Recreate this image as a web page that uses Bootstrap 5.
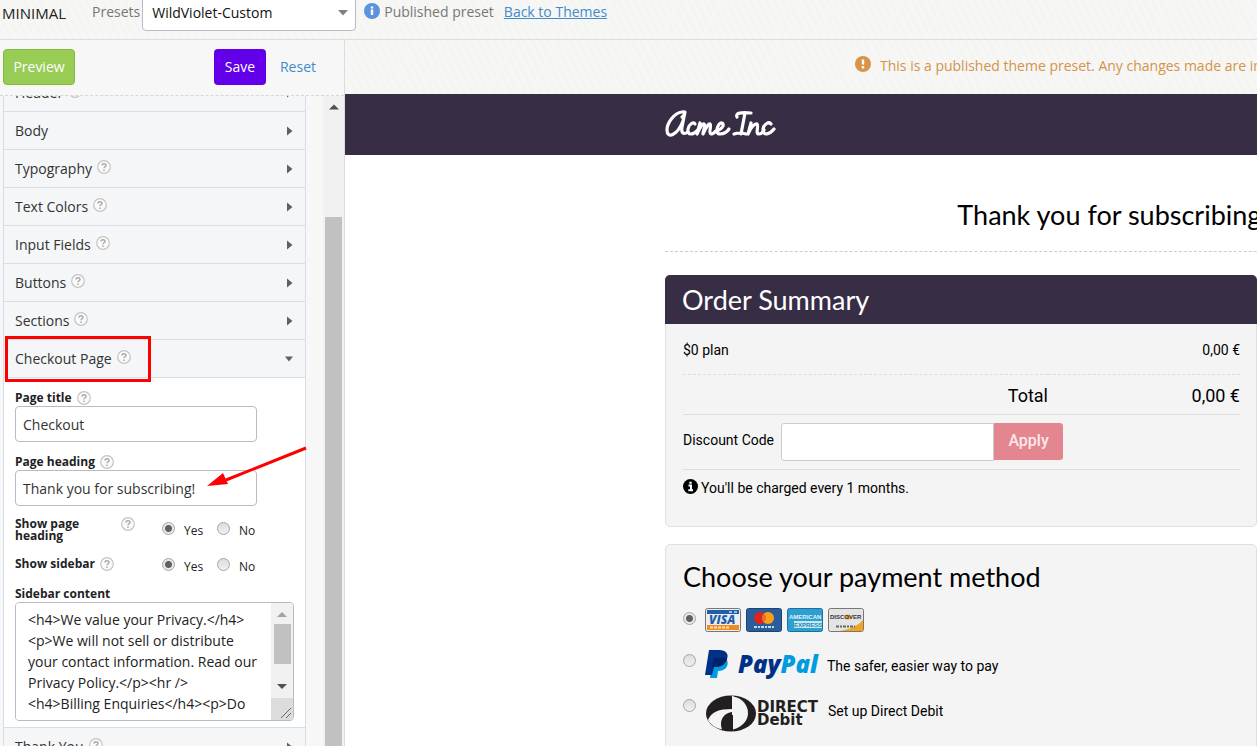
<!DOCTYPE html>
<html lang="en">
<head>
<meta charset="utf-8">
<meta name="viewport" content="width=device-width, initial-scale=1">
<title>Theme editor - Minimal</title>
<link href="https://cdn.jsdelivr.net/npm/bootstrap@5.3.0/dist/css/bootstrap.min.css" rel="stylesheet">
<style>
  body { font: 14px/20px "Open Sans", sans-serif; color: #222; background: #fff; }
  a { color: #428bca; }
  .paper { background: repeating-linear-gradient(65deg, #f6f6f4 0 3px, #f4f4f2 3px 5px, #f7f7f5 5px 7px); }

  /* top bar */
  .topbar { height: 40px; border-bottom: 1px solid #dcdcda; color: #777; padding-left: 2px; }
  .theme-name { color: #222; font-size: 15px; width: 90px; padding-top: 3px; }
  .preset-select { width: 214px; height: 40px; margin: -9px 8px 0 2px; padding: 4px 9px 0; font: 14px/20px "Open Sans", sans-serif; color: #111;
    border: 1px solid #bbb9c8; border-radius: 4px; background: #fff url("data:image/svg+xml,%3Csvg xmlns='http://www.w3.org/2000/svg' viewBox='0 0 10 6'%3E%3Cpath d='M0 0h10L5 5.500z' fill='%23808080'/%3E%3C/svg%3E") no-repeat right 7px top 18px / 10px 6px; }
  .status { gap: 4px; margin-right: 10px; }
  .tb-item { padding-top: 2px; }

  /* sidebar */
  .sidebar { width: 345px; background: #f7f7f7; border-right: 1px solid #dcdcdc; }
  .toolbar { height: 56px; padding: 9px 28px 0 3px; border-bottom: 1px dashed #d6d6d6; }
  .tool-btn { font: 14px/20px "Open Sans", sans-serif; height: 36px; padding: 0; border-radius: 4px; color: #fff; }
  .btn-preview { background: #9c5; border: 1px solid #82ba3c; width: 72px; }
  .btn-save { background: #6200ea; width: 52px; margin-right: 14px; border: 0; }
  .panel { width: 303px; margin: -22px 0 0 3px; border: 1px solid #d6dee9; border-width: 0 1px; background: #f4f6f8; }
  .panel-row { height: 38px; padding: 0 12px 0 11px; border: 0; border-bottom: 1px solid #d6dee9; background: #f4f6f8; font: 14px/20px "Open Sans", sans-serif; color: #333; }
  .help { width: 14px; height: 14px; flex: none; margin: -4px 0 0 5px; }
  .lbl .help { margin-top: -1px; }
  .marked { outline: 3px solid #f00; outline-offset: -1px; margin-left: -8px; padding: 11px 18px 11px 8px; }
  .form-area { background: #fff; padding: 13px 11px 6px; border-bottom: 1px solid #d6dee9; }
  .lbl { font-size: 12px; line-height: 14px; font-weight: 700; color: #222; margin-bottom: 1px; }
  .lbl-next { padding-top: 13px; }
  .lbl-side { padding-top: 11px; }
  .field { width: 242px; height: 36px; border: 1px solid #bbb9c8; border-radius: 4px; padding: 0 7px; color: #333; background: #fff; }
  .lbl-col { width: 120px; line-height: 12px; margin: 0; }
  .choices { margin-left: 27px; }
  .choice { width: 55px; font-size: 12px; line-height: 18px; gap: 9px; }
  .radio-grey { appearance: none; width: 13px; height: 13px; margin: 0; flex: none; border: 1px solid #a5a5a5; border-radius: 50%; background: linear-gradient(#ddd, #f0f0f0); }
  .radio-grey:checked { background: radial-gradient(circle, #606060 0 3px, #e9e9e9 4px); }
  .code-box { width: 279px; height: 119px; border: 1px solid #bbb9c8; border-radius: 4px; overflow: hidden; }
  .code-text { border: 0; resize: none; overflow: hidden; padding: 6px 0 0 12px; line-height: 21px; color: #222; background: #fff; min-width: 0; white-space: pre; }
  .code-scroll { width: 22px; background: #f1f1f1; }
  .code-thumb { width: 17px; height: 40px; background: #c1c1c1; }
  .grip { width: 22px; height: 22px; background: #dcdcdc; }
  .scroll-rail { width: 21px; background: #f1f1f1; padding: 8px 2px 0; }
  .rail-thumb { width: 17px; background: #c1c1c1; margin-top: 107px; }
  .arrow-layer { position: absolute; right: -14px; top: -25px; width: 102px; height: 44px; pointer-events: none; }

  /* themed page; it is wider than the pane that shows it */
  .notice { height: 54px; color: #d4934a; padding: 16px 0 0 510px; gap: 9px; }
  .page-view { font: 14px/20px Roboto, sans-serif; color: #000; background: #fff; }
  .brand-bar { height: 61px; background: #372d45; padding: 10px 0 0 320px; }
  .stage { width: 896px; margin-left: 320px; }
  .page-heading { font: 27px/32px Lato, sans-serif; margin: 0; padding: 44px 0 20px; border-bottom: 1px dashed #ccc; }
  .box { width: 592px; border: 1px solid #e0e0e0; border-radius: 5px; background: #f4f4f4; margin-bottom: 17px; }
  .box-first { margin-top: 23px; }
  .box-head { background: #372d45; height: 49px; padding: 9px 17px; border-radius: 5px 5px 0 0; margin: -1px -1px 0; }
  .box-title { font: 27px/32px Lato, sans-serif; margin: 0; }
  .box-body { padding: 0 16px 0 17px; }
  .row-plan td { height: 50px; border-bottom: 1px dashed #ddd; padding: 2px 0 0; }
  .row-total > * { height: 40px; border-bottom: 1px solid #ddd; font-size: 18px; font-weight: 400; padding: 4px 0 0; }
  .amount { width: 192px; }
  .discount { height: 55px; padding-top: 8px; border-bottom: 1px solid #ddd; gap: 7px; }
  .discount-label { padding-top: 7px; }
  .code-field { width: 213px; height: 38px; border: 1px solid #ccc; border-radius: 3px 0 0 3px; background: #fff; }
  .btn-apply { width: 69px; height: 37px; border: 0; background: #e4868f; color: #fbe9eb; font: 500 16px/20px Roboto, sans-serif; border-radius: 0 3px 3px 0; }
  .charge { height: 56px; padding-top: 8px; gap: 3px; }
  .charge-icon { margin-top: 1px; }
  .pay-title { padding-top: 16px; }
  .pay-row { gap: 9px; padding-top: 18px; }
  .pay-row .radio-grey { margin-top: 4px; }
  .cards-row { padding-top: 15px; }
  .debit-row { padding-top: 14px; }
  .pay-cards { gap: 5px; }
  .pay-text { padding: 6px 0 0; margin-left: -2px; }
  .pay-box { padding-bottom: 40px; }
</style>
</head>
<body class="vh-100 overflow-hidden d-flex flex-column">

<svg class="d-none">
  <symbol id="help" viewBox="0 0 14 14"><circle cx="7" cy="7" r="6.300" fill="#fafafa" stroke="#c4c4c4" stroke-width="1.200"/><path d="M5 5.500C5 3.200 9 3.200 9 5.400C9 6.800 7 6.700 7 8.300M7 9.500V10.900" fill="none" stroke="#aaa" stroke-width="1.500"/></symbol>
  <symbol id="right" viewBox="0 0 6 10"><path d="M0 0.500L5.500 5L0 9.500z" fill="#606060"/></symbol>
</svg>

<header class="topbar paper d-flex flex-shrink-0 text-nowrap">
  <div class="theme-name">MINIMAL</div>
  <label class="tb-item" for="preset">Presets</label>
  <select class="preset-select form-select" id="preset"><option>WildViolet-Custom</option></select>
  <span class="status tb-item d-flex"><svg width="16" height="18" viewBox="0 -1 16 18"><circle cx="8" cy="8" r="8" fill="#5b93dc"/><path d="M8 6.500V12M8 3.500V5.500" stroke="#fff" stroke-width="2.400"/></svg>Published preset</span>
  <a class="tb-item" href="#">Back to Themes</a>
</header>

<div class="d-flex flex-grow-1 overflow-hidden">
  <aside class="sidebar d-flex flex-column flex-shrink-0">
    <div class="toolbar d-flex align-items-start flex-shrink-0">
      <button class="tool-btn btn-preview">Preview</button>
      <button class="tool-btn btn-save ms-auto">Save</button>
      <a class="text-decoration-none pt-2" href="#">Reset</a>
    </div>
    <div class="d-flex flex-grow-1 overflow-hidden">
      <div class="panel flex-shrink-0">
        <button class="panel-row w-100 d-flex align-items-center">Header<svg class="help"><use href="#help"/></svg><svg class="ms-auto" width="6" height="10"><use href="#right"/></svg></button>
        <button class="panel-row w-100 d-flex align-items-center">Body<svg class="ms-auto" width="6" height="10"><use href="#right"/></svg></button>
        <button class="panel-row w-100 d-flex align-items-center">Typography<svg class="help"><use href="#help"/></svg><svg class="ms-auto" width="6" height="10"><use href="#right"/></svg></button>
        <button class="panel-row w-100 d-flex align-items-center">Text Colors<svg class="help"><use href="#help"/></svg><svg class="ms-auto" width="6" height="10"><use href="#right"/></svg></button>
        <button class="panel-row w-100 d-flex align-items-center">Input Fields<svg class="help"><use href="#help"/></svg><svg class="ms-auto" width="6" height="10"><use href="#right"/></svg></button>
        <button class="panel-row w-100 d-flex align-items-center">Buttons<svg class="help"><use href="#help"/></svg><svg class="ms-auto" width="6" height="10"><use href="#right"/></svg></button>
        <button class="panel-row w-100 d-flex align-items-center">Sections<svg class="help"><use href="#help"/></svg><svg class="ms-auto" width="6" height="10"><use href="#right"/></svg></button>
        <button class="panel-row w-100 d-flex align-items-center"><span class="marked d-flex align-items-center">Checkout Page<svg class="help"><use href="#help"/></svg></span><svg class="ms-auto" width="8" height="6" viewBox="0 0 10 6" preserveAspectRatio="none"><path d="M0 0.500H10L5 5.500z" fill="#606060"/></svg></button>

        <div class="form-area">
          <label class="lbl d-flex align-items-center" for="ptitle">Page title<svg class="help"><use href="#help"/></svg></label>
          <input class="field d-block" id="ptitle" value="Checkout">
          <label class="lbl lbl-next d-flex align-items-center" for="phead">Page heading<svg class="help"><use href="#help"/></svg></label>
          <div class="position-relative">
            <input class="field d-block" id="phead" value="Thank you for subscribing!">
            <svg class="arrow-layer" viewBox="0 0 102 44"><path d="M100 3L20 35" stroke="#f00" stroke-width="3"/><path d="M1 41L17 28L22 39z" fill="#f00"/></svg>
          </div>
          <div class="d-flex pt-2 pb-3">
            <div class="lbl lbl-col d-flex justify-content-between pt-1"><span>Show page<br>heading</span><svg class="help"><use href="#help"/></svg></div>
            <div class="choices d-flex pt-2">
              <label class="choice d-flex"><input class="radio-grey" type="radio" name="sh" checked>Yes</label>
              <label class="choice d-flex"><input class="radio-grey" type="radio" name="sh">No</label>
            </div>
          </div>
          <div class="d-flex">
            <div class="lbl lbl-col d-flex">Show sidebar<svg class="help"><use href="#help"/></svg></div>
            <div class="choices d-flex">
              <label class="choice d-flex"><input class="radio-grey" type="radio" name="ss" checked>Yes</label>
              <label class="choice d-flex"><input class="radio-grey" type="radio" name="ss">No</label>
            </div>
          </div>
          <label class="lbl lbl-side d-block" for="side">Sidebar content</label>
          <div class="code-box d-flex">
            <textarea class="code-text flex-grow-1" id="side">&lt;h4&gt;We value your Privacy.&lt;/h4&gt;
&lt;p&gt;We will not sell or distribute
your contact information. Read our
Privacy Policy.&lt;/p&gt;&lt;hr /&gt;
&lt;h4&gt;Billing Enquiries&lt;/h4&gt;&lt;p&gt;Do</textarea>
            <div class="code-scroll d-flex flex-column align-items-center">
              <svg width="10" height="21" viewBox="0 0 10 21"><path d="M0 14L5 9L10 14z" fill="#a3a3a3"/></svg>
              <div class="code-thumb"></div>
              <svg class="mt-auto" width="10" height="22" viewBox="0 0 10 22"><path d="M0 8H10L5 13z" fill="#505050"/></svg>
              <div class="grip"><svg class="d-block" width="22" height="22"><path d="M10 20L20 10M15 20L20 15" stroke="#666"/></svg></div>
            </div>
          </div>
        </div>
        <button class="panel-row w-100 d-flex align-items-center">Thank You<svg class="help"><use href="#help"/></svg><svg class="ms-auto" width="6" height="10"><use href="#right"/></svg></button>
      </div>
      <div class="scroll-rail ms-auto d-flex flex-column align-items-center">
        <svg class="flex-shrink-0" width="10" height="6"><path d="M0 5.500L5 0.500L10 5.500z" fill="#505050"/></svg>
        <div class="rail-thumb flex-grow-1"></div>
      </div>
    </div>
  </aside>

  <main class="flex-grow-1 overflow-hidden">
    <div class="notice paper d-flex text-nowrap overflow-hidden"><svg class="flex-shrink-0" width="16" height="16"><circle cx="8" cy="8" r="8" fill="#d8954a"/><path d="M8 3.500V8.500M8 10V12.400" stroke="#fff" stroke-width="2.400"/></svg><span>This is a published theme preset. Any changes made are immediately</span></div>
    <div class="page-view">
      <div class="brand-bar">
        <svg class="d-block" width="112" height="36" viewBox="0 0 112 36" role="img" aria-label="Acme Inc" fill="none" stroke="#fff" stroke-width="3.200" stroke-linecap="round" stroke-linejoin="round">
          <path d="M17 13C21 10 20 7 17 8C9 9 2 19 2 26C2 35 12 32 18 17L20 8L17 23C16 29 18 31 23 28"/>
          <path d="M30 20C29 17 24 20 23 25C22 32 28 31 33 26"/>
          <path d="M35 19L32 30C35 23 38 19 39 20C41 21 38 27 38 30C41 23 44 19 45 20C47 21 43 29 46 30C48 30 50 28 51 27"/>
          <path d="M51 27C57 26 60 20 57 19C53 18 49 30 55 30C59 30 62 28 64 25"/>
          <path d="M72 13C70 9 76 8 86 9M80 9L76 30M69 30Q75 28 81 30"/>
          <path d="M86 19L83 30C86 23 90 19 92 20C94 22 90 30 94 30C96 30 98 28 99 26"/>
          <path d="M106 20C104 17 99 20 98 25C98 33 105 30 109 25"/>
        </svg>
      </div>
      <div class="stage">
        <h1 class="page-heading text-center">Thank you for subscribing!</h1>

        <section class="box box-first">
          <div class="box-head"><h2 class="box-title text-white">Order Summary</h2></div>
          <div class="box-body">
            <table class="w-100">
              <tr class="row-plan"><td>$0 plan</td><td class="amount text-end">0,00 €</td></tr>
              <tr class="row-total"><th class="text-end" scope="row">Total</th><td class="text-end">0,00 €</td></tr>
            </table>
            <div class="discount d-flex">
              <label class="discount-label" for="code">Discount Code</label>
              <div class="d-flex">
                <input class="code-field" id="code">
                <button class="btn-apply">Apply</button>
              </div>
            </div>
            <div class="charge d-flex"><svg class="charge-icon" width="15" height="15" viewBox="0 0 15 15"><circle cx="7.500" cy="7.500" r="7.500"/><path d="M5.500 6.500H8V11M5.300 11.200H10M6.300 3.800H8.700" fill="none" stroke="#fff" stroke-width="2"/></svg>You'll be charged every 1 months.</div>
          </div>
        </section>

        <section class="box">
          <div class="box-body pay-box">
            <h2 class="box-title pay-title">Choose your payment method</h2>
            <label class="pay-row cards-row d-flex">
              <input class="radio-grey" type="radio" name="pay" checked>
              <span class="pay-cards d-flex">
                <svg width="36" height="24" viewBox="0 0 36 24"><rect x=".5" y=".5" width="35" height="23" rx="2" fill="#eee" stroke="#777"/><path d="M2 2H34V6H2z" fill="#1d5fae"/><path d="M2 17H34V22H2z" fill="#f08c1c"/><path d="M24 4H27M29 4H32" stroke="#cde" stroke-width="1.500"/><path d="M5 19.500H25" stroke="#fde0b8" stroke-width="2" stroke-dasharray="3 1"/><text x="4" y="16" font-family="Open Sans, sans-serif" font-size="12" font-weight="800" font-style="italic" fill="#1d5fae">VISA</text></svg>
                <svg width="36" height="24" viewBox="0 0 36 24"><rect x=".5" y=".5" width="35" height="23" rx="2" fill="#2a5d9c" stroke="#1d4470"/><circle cx="14" cy="10" r="6" fill="#e2231a"/><circle cx="22" cy="10" r="6" fill="#f9a11b"/><path d="M18 5.500A6 6 0 0 1 18 14.500A6 6 0 0 1 18 5.500" fill="#f26a21"/><path d="M8 19H28" stroke="#c9d8ea" stroke-width="2" stroke-dasharray="3 1 2 1"/></svg>
                <svg width="36" height="24" viewBox="0 0 36 24"><rect x=".5" y=".5" width="35" height="23" rx="2" fill="#2d9fd0" stroke="#1b6f98"/><rect x="7" y="13" width="28" height="7" fill="#c5e6f3"/><g font-family="Liberation Sans, sans-serif" font-weight="700"><text x="2" y="11" font-size="6" fill="#e0f3fb">AMERICAN</text><text x="7" y="19" font-size="6" fill="#2389b8">EXPRESS</text></g></svg>
                <svg width="36" height="24" viewBox="0 0 36 24"><rect x=".5" y=".5" width="35" height="23" rx="2" fill="#e4e4e4" stroke="#777"/><path d="M35 12V23H12C22 21 30 18 35 12z" fill="#efa51f"/><path d="M8 18.500H27" stroke="#666" stroke-width="2" stroke-dasharray="3 1 2 1"/><circle cx="20" cy="9" r="2.600" fill="#f39a1c"/><text x="2" y="11" font-family="Liberation Sans, sans-serif" font-size="6" font-weight="700" fill="#333">DISCOVER</text></svg>
              </span>
            </label>
            <label class="pay-row d-flex">
              <input class="radio-grey" type="radio" name="pay">
              <svg width="115" height="31" viewBox="0 0 115 31"><path d="M7 6H18C25 9 25 21 13 21L12 28H5z" fill="#009cde"/><path d="M4 0H14C21 0 24 4 22 9C20 15 16 17 9 17L7 25H0z" fill="#003087"/><path d="M9 8H22C21 14 17 17 9 17H7z" fill="#012169"/><text x="33" y="23" font-family="Open Sans, sans-serif" font-size="24" font-weight="800" font-style="italic" fill="#003087">Pay<tspan fill="#009cde">Pal</tspan></text></svg>
              <span class="pay-text">The safer, easier way to pay</span>
            </label>
            <label class="pay-row debit-row d-flex">
              <input class="radio-grey" type="radio" name="pay">
              <svg width="116" height="37" viewBox="0 0 116 37"><ellipse cx="26" cy="18.500" rx="25" ry="18" fill="#231f20"/><path d="M28 1.500C37 3 43 10 43 18C43 26 37 32 28 34.500z" fill="#f4f4f4"/><path d="M27 14C14 14 6 17 3 25C5 29 10 33 17 34.500C14 26 18 18 27 17z" fill="#f4f4f4"/><path d="M27 14V1H28.500V20H27z" fill="#f4f4f4"/><g font-family="DejaVu Sans, sans-serif" font-weight="700" fill="#231f20"><text x="52" y="17" font-size="15">DIRECT</text><text x="52" y="30" font-size="15">Debit</text></g></svg>
              <span class="pay-text">Set up Direct Debit</span>
            </label>
          </div>
        </section>
      </div>
    </div>
  </main>
</div>
<script src="https://cdn.jsdelivr.net/npm/bootstrap@5.3.0/dist/js/bootstrap.bundle.min.js"></script>
</body>
</html>
